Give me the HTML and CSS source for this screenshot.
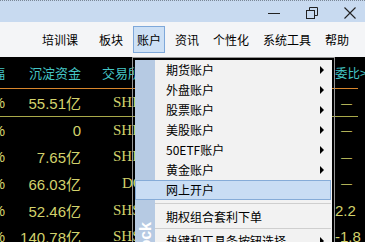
FILE: index.html
```html
<!DOCTYPE html>
<html lang="zh-CN">
<head>
    <meta charset="UTF-8">
    <meta name="viewport" content="width=device-width, initial-scale=1.0">
    <title>账户菜单</title>
    <link rel="stylesheet" href="styles.css">
</head>
<body>
    <div id="window">
        <!-- Title bar -->
        <div class="titlebar">
            <div class="controls">
                <svg class="ctl" width="12" height="12" viewBox="0 0 12 12"><line x1="0" y1="6.5" x2="12" y2="6.5" stroke="#222" stroke-width="1"/></svg>
                <svg class="ctl" width="12" height="12" viewBox="0 0 12 12"><rect x="0.5" y="3.5" width="8" height="8" fill="none" stroke="#222"/><path d="M3.5 3.5 V0.5 H11.5 V8.5 H8.5" fill="none" stroke="#222"/></svg>
                <svg class="ctl" width="12" height="12" viewBox="0 0 12 12"><path d="M0.5 0.5 L11.5 11.5 M11.5 0.5 L0.5 11.5" stroke="#222" stroke-width="1.1"/></svg>
            </div>
        </div>

        <!-- Menu bar -->
        <div class="menubar">
            <span class="menu-item first">培训课</span>
            <span class="menu-item">板块</span>
            <span class="menu-item active">账户</span>
            <span class="menu-item">资讯</span>
            <span class="menu-item">个性化</span>
            <span class="menu-item">系统工具</span>
            <span class="menu-item">帮助</span>
        </div>

        <!-- Quote board -->
        <div class="board">
            <div class="row head">
                <div class="c-pct">涨幅</div>
                <div class="c-fund">沉淀资金</div>
                <div class="c-ex" style="padding-left:21px">交易所</div>
                <div class="c-last">委比&gt;</div>
            </div>
            <div class="row first">
                <div class="c-pct"><span>2.15%</span></div>
                <div class="c-fund">55.51亿</div>
                <div class="c-ex" style="padding-left:32px">SHFE</div>
                <div class="c-last dash">—</div>
            </div>
            <div class="row">
                <div class="c-pct"><span>0.36%</span></div>
                <div class="c-fund">0</div>
                <div class="c-ex" style="padding-left:32px">SHFE</div>
                <div class="c-last dash">—</div>
            </div>
            <div class="row">
                <div class="c-pct"><span>1.06%</span></div>
                <div class="c-fund">7.65亿</div>
                <div class="c-ex" style="padding-left:32px">SHFE</div>
                <div class="c-last dash">—</div>
            </div>
            <div class="row">
                <div class="c-pct"><span>0.86%</span></div>
                <div class="c-fund">66.03亿</div>
                <div class="c-ex" style="padding-left:41px">DCE</div>
                <div class="c-last dash">—</div>
            </div>
            <div class="row">
                <div class="c-pct"><span>1.26%</span></div>
                <div class="c-fund">52.46亿</div>
                <div class="c-ex" style="padding-left:32px">SHSE</div>
                <div class="c-last">2.2</div>
            </div>
            <div class="row">
                <div class="c-pct"><span>0.56%</span></div>
                <div class="c-fund">140.78亿</div>
                <div class="c-ex" style="padding-left:32px">SHSE</div>
                <div class="c-last">-1.8</div>
            </div>
        </div>

        <!-- Account dropdown -->
        <div class="dropdown">
            <div class="band">Stock</div>
            <div class="drop-item">期货账户<i class="arrow"></i></div>
            <div class="drop-item">外盘账户<i class="arrow"></i></div>
            <div class="drop-item">股票账户<i class="arrow"></i></div>
            <div class="drop-item">美股账户<i class="arrow"></i></div>
            <div class="drop-item">50ETF账户<i class="arrow"></i></div>
            <div class="drop-item">黄金账户<i class="arrow"></i></div>
            <div class="drop-item hover">网上开户</div>
            <div class="sep sep-a"></div>
            <div class="drop-item">期权组合套利下单</div>
            <div class="sep sep-b"></div>
            <div class="drop-item">热键和工具条按钮选择<i class="arrow"></i></div>
        </div>
    </div>
</body>
</html>
```

FILE: styles.css
```css
body {
    margin: 0;
    padding: 0;
    width: 365px;
    height: 242px;
    overflow: hidden;
    background-color: #000;
    font-family: "Noto Sans CJK SC", sans-serif;
}

#window {
    position: relative;
    width: 365px;
    height: 242px;
    overflow: hidden;
}

.titlebar {
    height: 21px;
    border-top: 1px dotted #7a8796;
    background-color: #c8daf0;
    display: flex;
    align-items: center;
    justify-content: flex-end;
}

.controls {
    display: flex;
    align-items: center;
    gap: 26px;
    padding-right: 9px;
    padding-top: 2px;
}

.ctl {
    display: block;
}

.menubar {
    height: 35px;
    background-color: #f4f5f7;
    display: flex;
    align-items: center;
    gap: 6px;
    padding-left: 38px;
    font-size: 12px;
    color: #000;
}

.menu-item {
    flex-shrink: 0;
    height: 27px;
    line-height: 25px;
    padding: 0 3px;
    box-sizing: border-box;
    border: 1px solid transparent;
    white-space: nowrap;
}

.menu-item.first {
    margin-right: 7px;
}

.menu-item.active {
    background-color: #cde0f5;
    border-color: #7ea8da;
}

.board {
    background-color: #000;
    font-family: "Liberation Sans", "Noto Sans CJK SC", sans-serif;
    font-size: 15px;
    color: #d2d26c;
}

.row {
    display: flex;
    align-items: center;
    width: 358px;
    height: 26.6px;
}

.row.head {
    height: 31px;
    border-bottom: 1px solid #d8862c;
    font-family: "Noto Sans CJK SC", sans-serif;
    font-size: 13px;
    color: #45c6c6;
}

.row.first {
    height: 27px;
    border-bottom: 1px solid #a9a94a;
}

.c-pct {
    width: 5px;
    overflow: hidden;
    display: flex;
    justify-content: flex-end;
    white-space: nowrap;
}

.c-fund {
    width: 76px;
    text-align: right;
    white-space: nowrap;
}

.c-ex {
    flex: 1;
    white-space: nowrap;
    font-family: "Liberation Serif", serif;
}

.c-last {
    width: 23px;
    white-space: nowrap;
    padding-left: 1px;
}

.row.head .c-ex {
    font-family: "Noto Sans CJK SC", sans-serif;
}

.row.head .c-last {
    padding-left: 0;
    font-size: 12.5px;
}

.c-last.dash {
    text-align: center;
    font-size: 11px;
}

.dropdown {
    position: absolute;
    left: 132px;
    top: 57px;
    width: 197px;
    height: 200px;
    padding: 2px;
    border: 1px solid #979797;
    background-color: #f2f2f2;
    background-image: linear-gradient(90deg, #b6cae3 0 20px, transparent 20px);
    background-origin: content-box;
    background-clip: content-box;
    font-size: 12px;
    color: #000;
}

.band {
    position: absolute;
    left: 4px;
    top: 164px;
    writing-mode: vertical-rl;
    transform: rotate(180deg);
    font-family: "Liberation Sans", sans-serif;
    font-weight: bold;
    font-size: 16px;
    line-height: 18px;
    color: #fff;
}

.drop-item {
    height: 20px;
    line-height: 20px;
    padding-left: 30px;
    display: flex;
    align-items: center;
    box-sizing: border-box;
    border: 1px solid transparent;
}

.drop-item.hover {
    position: relative;
    margin-right: 1px;
    background-color: #c9ddf4;
    border-color: #86acd8;
}

.arrow {
    margin-left: auto;
    margin-right: 7px;
    width: 0;
    height: 0;
    border-left: 4px solid #000;
    border-top: 4px solid transparent;
    border-bottom: 4px solid transparent;
}

.sep {
    margin-left: 20px;
    margin-right: 1px;
}

.sep-a {
    height: 3px;
    border-bottom: 1px solid #cfcfcf;
    margin-bottom: 3px;
}

.sep-b {
    height: 1px;
    border-bottom: 1px solid #cfcfcf;
    margin-bottom: 2px;
}
```
